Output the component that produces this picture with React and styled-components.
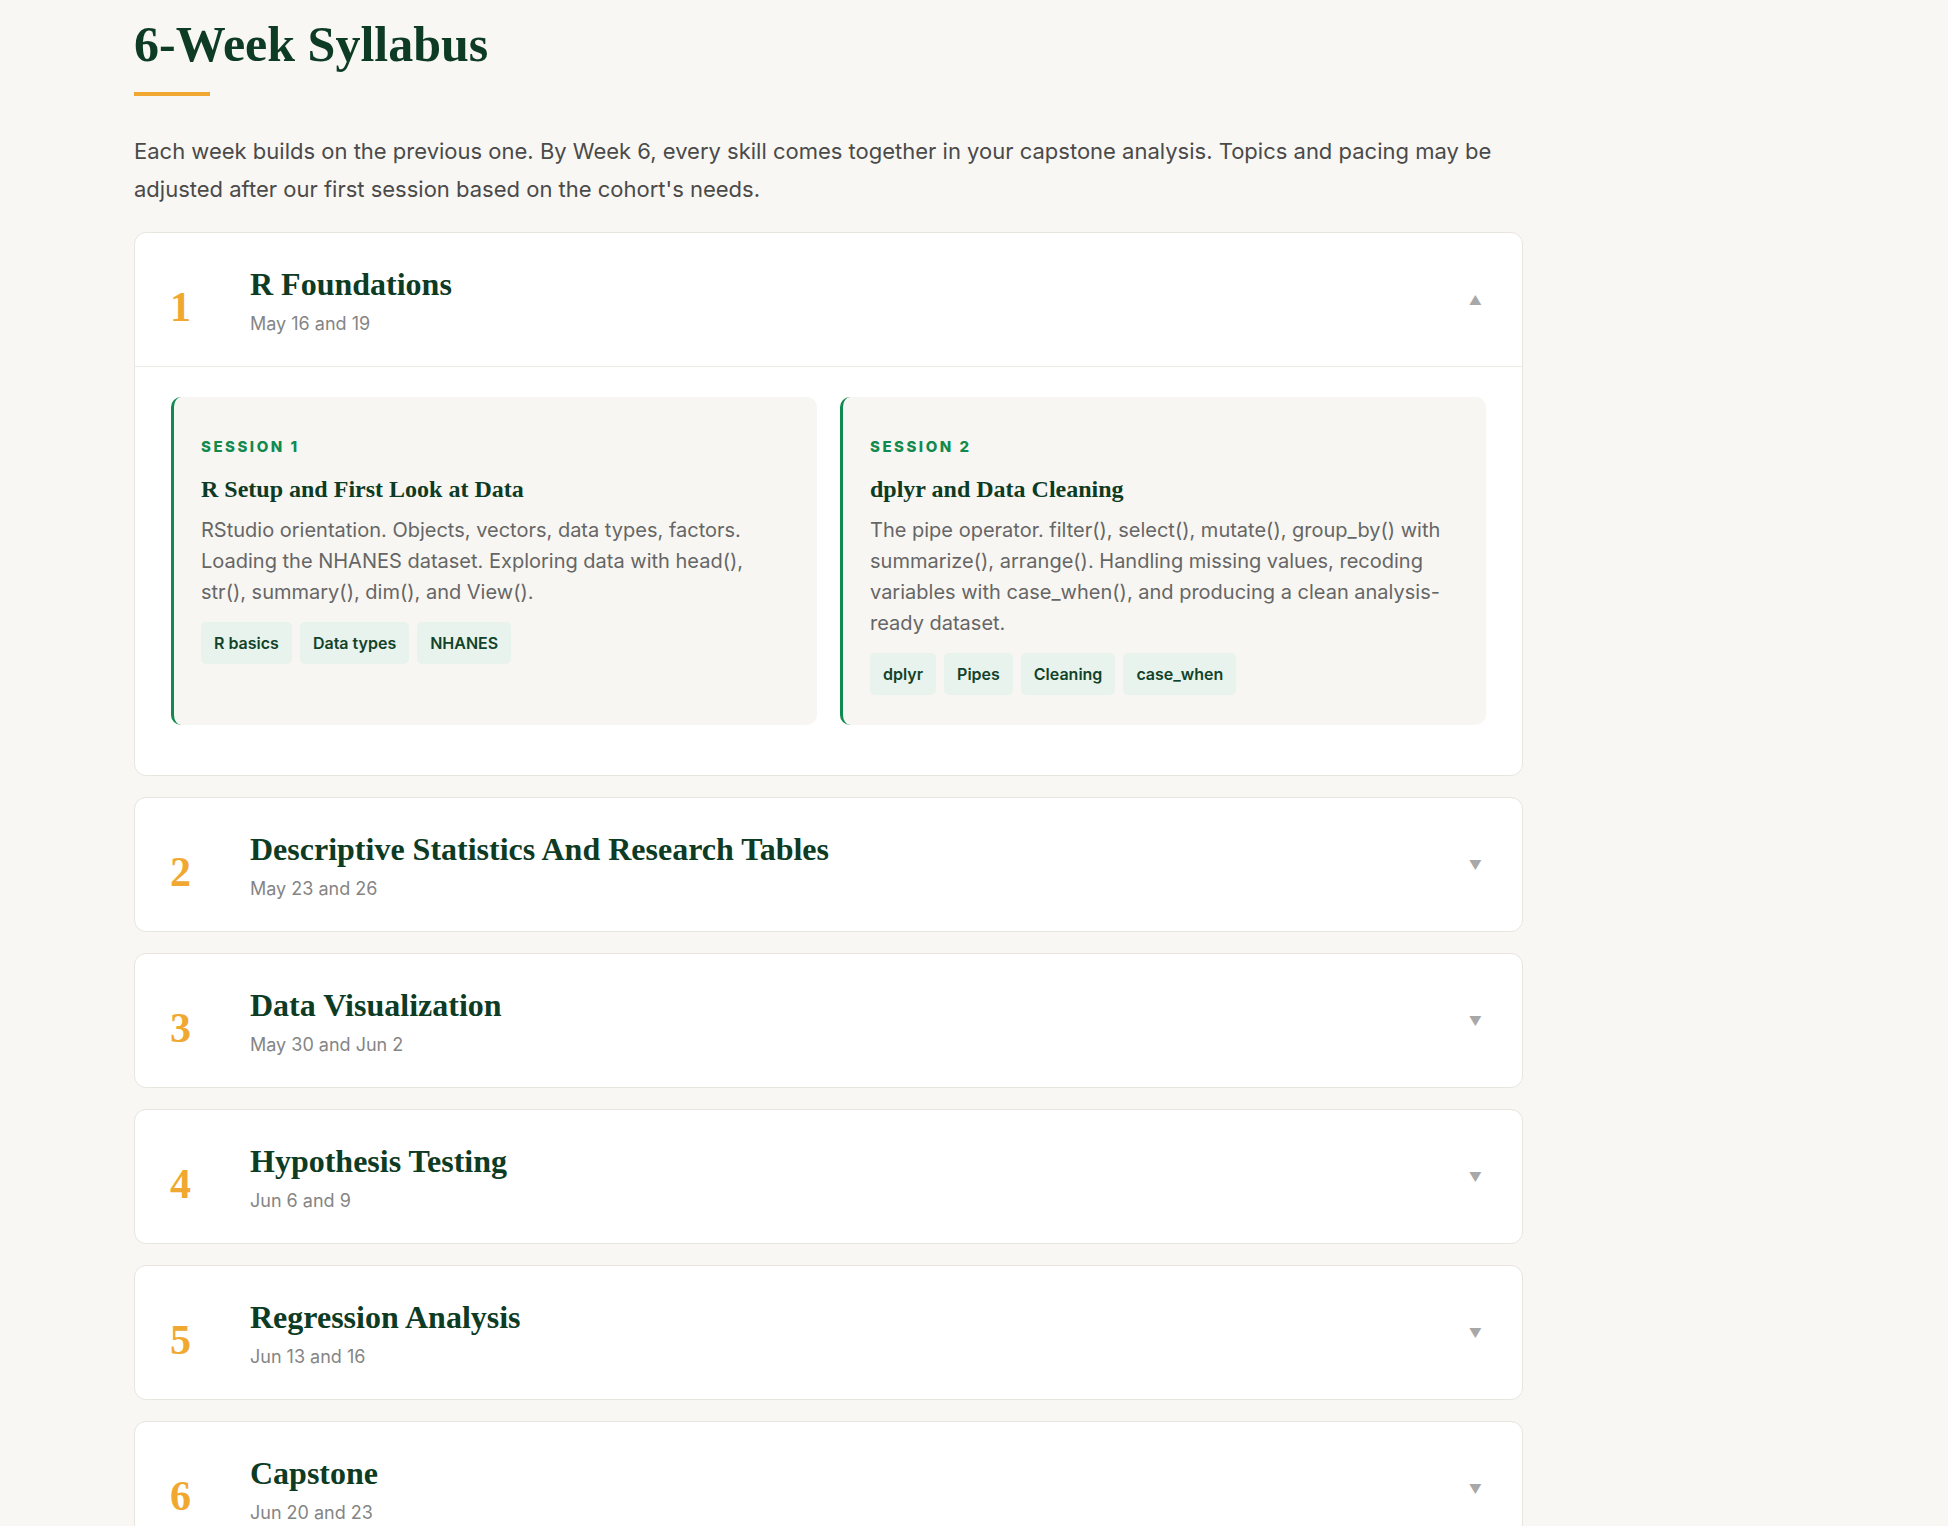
import React from "react";
import styled, { createGlobalStyle } from "styled-components";

const Global = createGlobalStyle`
  body { margin: 0; background: #f9f7f3; font-family: Inter, "Open Sans", sans-serif; }
`;
const Page = styled.div`padding: 8px 0 40px 134px; width: 1389px;`;
const H1 = styled.h1`
  margin: 0; font-family: "Liberation Serif", serif; font-weight: 700; font-size: 50px;
  line-height: 72px; color: #0d3b24;
`;
const Rule = styled.div`width: 76px; height: 4px; background: #f0a830; margin: 12px 0 36px;`;
const Intro = styled.p`
  margin: 0 0 24px; font-size: 22px; line-height: 38px; color: #4a4a4a;
`;
const List = styled.div`display: flex; flex-direction: column; gap: 21px;`;
const Card = styled.div`
  background: #fff; border: 1px solid #e8e5df; border-radius: 12px; overflow: hidden;
`;
const Header = styled.div`
  height: 133px; display: flex; align-items: center; padding: 0 40px 0 35px;
  border-bottom: ${p => (p.$open ? "1px solid #eeebe5" : "none")};
`;
const Num = styled.div`
  width: 80px; font-family: "Liberation Serif", serif; font-weight: 700; font-size: 42px;
  color: #f0a830; padding-top: 14px;
`;
const HText = styled.div`flex: 1;`;
const Title = styled.div`
  font-family: "Liberation Serif", serif; font-weight: 700; font-size: 32px; color: #0d3b24;
`;
const DateT = styled.div`font-size: 18px; color: #858585; margin-top: 10px;`;
const Chevron = styled.span`font-size: 13px; color: #a8a8a8;`;
const Body = styled.div`
  display: grid; grid-template-columns: 1fr 1fr; gap: 23px; padding: 30px 36px 50px;
`;
const Session = styled.div`
  background: #f8f6f2; border-left: 3px solid #118a4f; border-radius: 10px;
  padding: 40px 32px 30px 27px;
`;
const Label = styled.div`
  font-size: 15px; font-weight: 800; letter-spacing: 2.5px; color: #118a4f;
`;
const STitle = styled.div`
  font-family: "Liberation Serif", serif; font-weight: 700; font-size: 24px; color: #0d3b24;
  margin: 20px 0 12px;
`;
const Desc = styled.p`margin: 0; font-size: 20px; line-height: 31px; color: #666;`;
const Tags = styled.div`display: flex; gap: 8px; margin-top: 14px;`;
const Tag = styled.span`
  background: #e7f3ec; color: #12432a; font-size: 16px; font-weight: 600;
  padding: 11px 13px; border-radius: 5px;
`;

const weeks = [
  ["R Foundations", "May 16 and 19"],
  ["Descriptive Statistics And Research Tables", "May 23 and 26"],
  ["Data Visualization", "May 30 and Jun 2"],
  ["Hypothesis Testing", "Jun 6 and 9"],
  ["Regression Analysis", "Jun 13 and 16"],
  ["Capstone", "Jun 20 and 23"],
];
const sessions = [
  {
    l: "SESSION 1", t: "R Setup and First Look at Data",
    d: "RStudio orientation. Objects, vectors, data types, factors. Loading the NHANES dataset. Exploring data with head(), str(), summary(), dim(), and View().",
    tags: ["R basics", "Data types", "NHANES"],
  },
  {
    l: "SESSION 2", t: "dplyr and Data Cleaning",
    d: "The pipe operator. filter(), select(), mutate(), group_by() with summarize(), arrange(). Handling missing values, recoding variables with case_when(), and producing a clean analysis-ready dataset.",
    tags: ["dplyr", "Pipes", "Cleaning", "case_when"],
  },
];

export default function App() {
  return (
    <Page>
      <Global />
      <H1>6-Week Syllabus</H1>
      <Rule />
      <Intro>
        Each week builds on the previous one. By Week 6, every skill comes together in your capstone analysis. Topics and pacing may be adjusted after our first session based on the cohort's needs.
      </Intro>
      <List>
        {weeks.map(([t, d], i) => (
          <Card key={t}>
            <Header $open={i === 0}>
              <Num>{i + 1}</Num>
              <HText>
                <Title>{t}</Title>
                <DateT>{d}</DateT>
              </HText>
              <Chevron>{i === 0 ? "▲" : "▼"}</Chevron>
            </Header>
            {i === 0 && (
              <Body>
                {sessions.map(s => (
                  <Session key={s.l}>
                    <Label>{s.l}</Label>
                    <STitle>{s.t}</STitle>
                    <Desc>{s.d}</Desc>
                    <Tags>{s.tags.map(x => <Tag key={x}>{x}</Tag>)}</Tags>
                  </Session>
                ))}
              </Body>
            )}
          </Card>
        ))}
      </List>
    </Page>
  );
}
